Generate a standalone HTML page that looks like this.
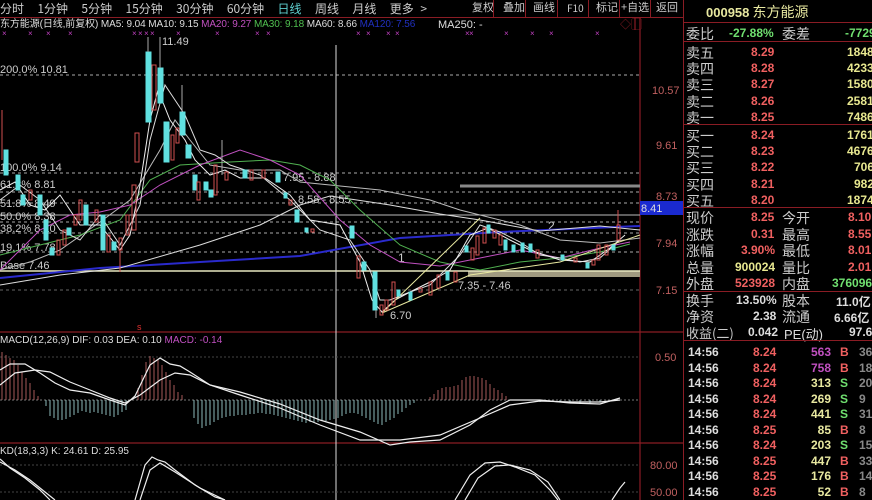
<!DOCTYPE html>
<html><head><meta charset="utf-8"><style>
*{margin:0;padding:0}
body{width:872px;height:500px;background:#000;overflow:hidden;position:relative;font-family:"Liberation Sans","Noto Sans CJK SC",sans-serif;color:#ddd}
.t{position:absolute;white-space:nowrap;line-height:1}
.rp{position:absolute;left:683px;top:0;width:189px;height:500px;border-left:1px solid #8a1c24}
.row{position:absolute;left:0;width:189px;height:16px;font-size:13px}
.row span{position:absolute;top:0;white-space:nowrap}
.l{left:2px;color:#ccc;font-family:"Noto Sans CJK SC",sans-serif;font-size:14px}
.p{color:#f06060;font-weight:bold;font-size:12px}
.v{color:#e8e890;font-weight:bold;font-size:12px}
.hl{position:absolute;left:0;width:189px;height:1px;background:#8a1c24}
.tk{font-size:12px;font-weight:bold}
</style></head><body>
<div class="t" style="left:0;top:3px;font-size:12px;color:#ccc;font-family:'Noto Sans CJK SC',sans-serif;word-spacing:4px">分时&nbsp; 1分钟&nbsp; 5分钟&nbsp; 15分钟&nbsp; 30分钟&nbsp; 60分钟&nbsp; <span style="color:#5fd0d0">日线</span>&nbsp; 周线&nbsp; 月线&nbsp; 更多 &gt;</div>
<div style="position:absolute;left:0;top:17px;width:683px;height:1px;background:#8a1c24"></div>
<div style="position:absolute;left:468px;top:0;width:215px;height:17px;font-size:11px;color:#ccc;font-family:'Noto Sans CJK SC',sans-serif">
<span class="t" style="left:4px;top:2px">复权</span><span class="t" style="left:35px;top:2px">叠加</span><span class="t" style="left:65px;top:2px">画线</span><span class="t" style="left:99px;top:3px;font-size:10px">F10</span><span class="t" style="left:128px;top:2px">标记</span><span class="t" style="left:153px;top:2px">+自选</span><span class="t" style="left:188px;top:2px">返回</span>
<div style="position:absolute;left:25px;top:0;width:1px;height:17px;background:#8a1c24"></div><div style="position:absolute;left:57px;top:0;width:1px;height:17px;background:#8a1c24"></div><div style="position:absolute;left:89px;top:0;width:1px;height:17px;background:#8a1c24"></div><div style="position:absolute;left:120px;top:0;width:1px;height:17px;background:#8a1c24"></div><div style="position:absolute;left:151px;top:0;width:1px;height:17px;background:#8a1c24"></div><div style="position:absolute;left:182px;top:0;width:1px;height:17px;background:#8a1c24"></div>
</div>
<div class="t" style="left:0;top:20px;font-size:10px;letter-spacing:-0.1px;color:#ddd">东方能源(日线,前复权) MA5: 9.04 MA10: 9.15 <span style="color:#c050c0">MA20: 9.27</span> <span style="color:#50c050">MA30: 9.18</span> MA60: 8.66 <span style="color:#2030c0">MA120: 7.56</span></div>
<div class="t" style="left:438px;top:20px;font-size:11px;color:#ddd">MA250: -</div>
<div class="t" style="left:620px;top:20px;font-size:11px;color:#8a1c24">◇▢</div>

<svg width="683" height="500" style="position:absolute;left:0;top:0" font-family="Liberation Sans" font-size="11">
<g stroke="#8a1c24" stroke-width="1.2">
<line x1="640" y1="18" x2="640" y2="500"/><line x1="0" y1="332" x2="683" y2="332"/><line x1="0" y1="443" x2="683" y2="443"/>
<line x1="635" y1="18" x2="635" y2="30"/>
</g>
<g fill="#c040c0" font-size="8"><text x="2" y="36">×</text><text x="28" y="36">×</text><text x="46" y="36">×</text><text x="68" y="36">×</text><text x="132" y="36">×</text><text x="138" y="36">×</text><text x="144" y="36">×</text><text x="150" y="36">×</text><text x="176" y="36">×</text><text x="215" y="36">×</text><text x="255" y="36">×</text><text x="266" y="36">×</text><text x="356" y="36">×</text><text x="366" y="36">×</text><text x="386" y="36">×</text><text x="395" y="36">×</text><text x="465" y="36">×</text><text x="469" y="36">×</text><text x="504" y="36">×</text><text x="530" y="36">×</text><text x="549" y="36">×</text><text x="595" y="36">×</text></g>
<g stroke="#aaa" stroke-dasharray="3,3" stroke-width="1">
<line x1="0" y1="75" x2="640" y2="75"/><line x1="0" y1="173" x2="640" y2="173"/><line x1="0" y1="192" x2="640" y2="192"/><line x1="0" y1="203" x2="640" y2="203"/><line x1="0" y1="222" x2="640" y2="222"/><line x1="0" y1="233" x2="640" y2="233"/><line x1="0" y1="252" x2="640" y2="252"/><line x1="0" y1="290" x2="640" y2="290" stroke="#666"/>
</g>
<line x1="0" y1="215" x2="640" y2="215" stroke="#bbb"/>
<line x1="460" y1="186" x2="640" y2="186" stroke="#888" stroke-width="3"/>
<rect x="468" y="271" width="172" height="6" fill="#a09a80"/>
<line x1="0" y1="271" x2="640" y2="271" stroke="#e8e8c0" stroke-width="1.5"/>
<line x1="336" y1="45" x2="336" y2="500" stroke="#ddd"/>
<g fill="#ccc"><text x="0" y="73">200.0% 10.81</text><text x="0" y="171">100.0% 9.14</text><text x="0" y="188">61.8% 8.81</text><text x="0" y="207">51.8% 8.49</text><text x="0" y="220">50.0% 8.38</text><text x="0" y="232">38.2% 8.10</text><text x="0" y="251">19.1% 7.78</text><text x="0" y="269">Base 7.46</text>
<text x="162" y="45">11.49</text><text x="283" y="181">7.95 - 8.88</text><text x="298" y="203">8.58 - 8.55</text><text x="390" y="319">6.70</text><text x="458" y="289">7.35 - 7.46</text><text x="398" y="262" font-size="12">1</text><text x="548" y="230" font-size="12">2</text></g>
<g fill="none" stroke-width="1">
<polyline stroke="#2a2acc" stroke-width="2" points="0,278 100,268 200,262 300,256 400,238 500,232 640,226"/>
<polyline stroke="#ddd" points="0,285 60,275 120,268 200,245 260,225 300,205 330,196 390,205 440,214 480,220 540,231 600,226 640,230"/>
<polyline stroke="#bbb" points="0,270 30,262 60,250 100,222 130,200 160,150 175,120 190,140 210,165 240,170 280,170 300,182 330,185 380,190 430,200 460,210 520,225 560,240 600,243 640,238"/>
<polyline stroke="#50b050" points="0,255 40,245 80,235 120,220 150,180 180,165 230,162 270,160 300,165 330,180 360,210 400,245 440,262 480,270 520,262 560,258 600,252 630,244"/>
<polyline stroke="#c050c0" points="0,270 20,250 40,230 70,215 100,212 130,205 160,185 200,165 240,150 270,160 300,175 340,220 370,245 400,262 440,266 480,258 520,250 560,258 600,248 630,242"/>
<polyline stroke="#ddd" points="0,200 20,185 40,200 60,230 80,240 100,215 120,245 140,205 150,140 165,85 175,100 185,115 200,150 215,155 230,165 260,175 290,200 320,230 350,240 370,270 380,300 390,300 410,292 430,285 460,255 480,225 500,232 520,242 540,255 560,258 580,262 600,258 620,240"/>
<polyline stroke="#eee" points="0,190 15,182 30,205 45,210 60,195 80,225 100,225 120,250 130,235 140,185 150,120 158,90 170,120 185,140 195,160 210,175 225,170 240,178 265,178 290,195 310,220 340,225 360,262 372,300 382,312 395,300 410,292 430,282 450,270 470,235 488,228 510,240 530,250 560,260 590,262 610,248 625,235"/>
<polyline stroke="#e8e8a0" points="382,313 470,275 560,262 640,235"/>
<polyline stroke="#e8e8a0" points="382,313 480,218"/>
</g>
<g stroke-width="1">
<g fill="#60e0e0" stroke="#60e0e0">
<rect x="4" y="150" width="4" height="25"/><rect x="16" y="175" width="4" height="15"/><rect x="21" y="195" width="4" height="10"/><rect x="38" y="195" width="4" height="20"/><rect x="44" y="220" width="4" height="20"/><rect x="50" y="248" width="4" height="7"/><rect x="67" y="228" width="4" height="7"/><rect x="84" y="205" width="4" height="20"/><rect x="101" y="215" width="4" height="35"/><rect x="112" y="242" width="4" height="8"/>
<rect x="146" y="52" width="5" height="70"/><rect x="158" y="68" width="5" height="35"/><rect x="164" y="122" width="5" height="40"/><rect x="180" y="112" width="5" height="23"/><rect x="186" y="145" width="5" height="13"/><rect x="193" y="175" width="4" height="15"/><rect x="204" y="182" width="4" height="8"/><rect x="209" y="190" width="4" height="7"/><rect x="243" y="170" width="4" height="8"/><rect x="276" y="172" width="4" height="10"/><rect x="284" y="193" width="3" height="5"/><rect x="295" y="210" width="4" height="12"/><rect x="305" y="228" width="3" height="4"/>
<rect x="350" y="226" width="4" height="12"/><rect x="362" y="262" width="4" height="8"/><rect x="373" y="272" width="4" height="38"/><rect x="397" y="290" width="3" height="6"/><rect x="409" y="292" width="3" height="8"/><rect x="446" y="272" width="3" height="8"/><rect x="465" y="246" width="3" height="6"/><rect x="487" y="225" width="3" height="8"/><rect x="504" y="240" width="3" height="10"/><rect x="512" y="245" width="3" height="7"/><rect x="521" y="243" width="3" height="9"/><rect x="529" y="244" width="3" height="8"/><rect x="561" y="255" width="3" height="5"/><rect x="586" y="263" width="3" height="5"/><rect x="612" y="245" width="3" height="5"/>
</g>
<g fill="none" stroke="#d05050">
<line x1="2" y1="110" x2="2" y2="160"/><rect x="29" y="190" width="3" height="10"/><rect x="57" y="240" width="3" height="15"/><rect x="63" y="230" width="3" height="15"/><rect x="74" y="215" width="3" height="10"/><rect x="79" y="200" width="3" height="20"/><rect x="95" y="210" width="3" height="12"/><rect x="107" y="235" width="3" height="17"/><rect x="119" y="238" width="3" height="12"/><line x1="120" y1="250" x2="120" y2="272"/><rect x="126" y="215" width="3" height="20"/><rect x="132" y="185" width="4" height="45"/><rect x="135" y="133" width="4" height="29"/>
<rect x="152" y="65" width="4" height="45"/><rect x="171" y="135" width="3" height="25"/><rect x="176" y="128" width="3" height="15"/><rect x="197" y="182" width="3" height="18"/><rect x="214" y="165" width="3" height="30"/><rect x="225" y="172" width="3" height="8"/><rect x="250" y="170" width="3" height="10"/><rect x="262" y="170" width="3" height="8"/><rect x="289" y="200" width="3" height="5"/><rect x="311" y="229" width="3" height="3"/>
<rect x="357" y="256" width="3" height="22"/><rect x="380" y="305" width="3" height="10"/><rect x="385" y="300" width="3" height="10"/><rect x="392" y="282" width="3" height="23"/><rect x="419" y="288" width="3" height="4"/><rect x="429" y="282" width="3" height="13"/><rect x="437" y="275" width="3" height="13"/><rect x="454" y="272" width="3" height="10"/><rect x="471" y="248" width="3" height="12"/><rect x="476" y="236" width="3" height="19"/><rect x="483" y="228" width="3" height="15"/><rect x="493" y="230" width="3" height="8"/><rect x="499" y="235" width="3" height="10"/><rect x="536" y="250" width="3" height="8"/><rect x="574" y="258" width="3" height="4"/><rect x="592" y="260" width="3" height="5"/><rect x="597" y="245" width="3" height="15"/><rect x="605" y="245" width="3" height="10"/><rect x="617" y="225" width="3" height="15"/><line x1="618" y1="210" x2="618" y2="225"/>
</g>
<g stroke="#aaa"><line x1="148" y1="37" x2="148" y2="52"/><line x1="160" y1="37" x2="160" y2="68"/><line x1="182" y1="85" x2="182" y2="112"/><line x1="222" y1="140" x2="222" y2="175"/><line x1="376" y1="310" x2="376" y2="318"/></g>
<text x="137" y="330" fill="#e03030" font-size="9">s</text>
</g>
<g fill="#c06060" font-size="11"><text x="652" y="94">10.57</text><text x="656" y="149">9.61</text><text x="656" y="200">8.73</text><text x="656" y="247">7.94</text><text x="656" y="294">7.15</text><text x="655" y="361">0.50</text><text x="650" y="469">80.00</text><text x="650" y="496">50.00</text></g>
<rect x="640" y="201" width="43" height="14" fill="#1a2ad0"/><text x="641" y="212" fill="#ddd">8.41</text>
<text x="0" y="343" fill="#ddd" font-size="10">MACD(12,26,9) DIF: 0.03 DEA: 0.10 <tspan fill="#c050c0">MACD: -0.14</tspan></text>
<line x1="0" y1="400" x2="640" y2="400" stroke="#777" stroke-dasharray="2,2"/>
<line x1="0" y1="357" x2="640" y2="357" stroke="#444" stroke-dasharray="2,2"/>
<line x1="0" y1="465" x2="640" y2="465" stroke="#444" stroke-dasharray="2,2"/>
<line x1="0" y1="492" x2="640" y2="492" stroke="#444" stroke-dasharray="2,2"/>
<path stroke="#d07070" stroke-width="0.8" d="M2 400V352M6 400V355M10 400V358M14 400V360M18 400V365M22 400V372M26 400V378M30 400V383M34 400V390M38 400V396M138 400V388M142 400V375M146 400V362M150 400V356M154 400V358M158 400V360M162 400V365M166 400V372M170 400V380M174 400V385M178 400V392M182 400V395M430 400V397M434 400V394M438 400V390M442 400V388M446 400V387M450 400V387M454 400V386M458 400V385M462 400V380M466 400V377M470 400V376M474 400V376M478 400V377M482 400V378M486 400V380M490 400V384M494 400V388M498 400V390M502 400V393M506 400V396"/>
<path stroke="#b0e8e8" stroke-width="0.8" d="M46 400V406M50 400V416M54 400V418M58 400V420M62 400V420M66 400V419M70 400V417M74 400V415M78 400V413M82 400V411M86 400V412M90 400V413M94 400V412M98 400V413M102 400V414M106 400V415M110 400V416M114 400V417M118 400V415M122 400V412M126 400V410M194 400V418M198 400V424M202 400V428M206 400V426M210 400V425M214 400V422M218 400V420M222 400V418M226 400V417M230 400V416M234 400V416M238 400V415M242 400V415M246 400V415M250 400V414M254 400V414M258 400V413M262 400V413M266 400V414M270 400V414M274 400V415M278 400V416M282 400V417M286 400V418M290 400V419M294 400V420M298 400V421M302 400V422M306 400V423M310 400V422M314 400V422M318 400V422M322 400V421M326 400V421M330 400V420M334 400V419M338 400V418M342 400V416M346 400V414M350 400V413M354 400V413M358 400V414M362 400V416M366 400V418M370 400V420M374 400V422M378 400V424M382 400V425M386 400V422M390 400V420M394 400V418M398 400V414M402 400V412M406 400V408M410 400V405M414 400V403M540 400V402M560 400V402M570 400V403M580 400V404M590 400V403M600 400V402"/>
<g fill="none" stroke="#eee" stroke-width="1.2">
<polyline points="0,370 10,364 25,364 40,373 55,383 70,390 90,393 110,400 125,405 135,396 150,365 160,358 170,364 180,366 190,372 210,385 240,392 280,404 320,420 360,432 390,445 410,442 440,440 470,425 490,410 510,400 540,400 570,403 600,404 620,398"/>
<polyline points="0,385 15,373 35,370 50,372 70,382 90,390 110,398 125,403 140,395 160,380 175,373 190,375 210,385 240,395 280,408 320,425 360,440 400,440 440,435 480,418 510,405 540,401 570,402 600,402 620,400"/>
</g>
<text x="0" y="454" fill="#ddd" font-size="10">KD(18,3,3) K: 24.61 D: 25.95</text>
<g fill="none" stroke="#eee" stroke-width="1.2">
<polyline points="0,459 10,468 25,478 40,490 50,500"/><polyline points="0,462 15,470 30,480 45,492 55,500"/>
<polyline points="135,500 145,465 152,457 158,460 165,462 175,470 195,485 215,497 225,500"/>
<polyline points="140,500 150,470 160,463 175,472 200,488 225,500"/>
<polyline points="455,500 470,475 485,463 500,462 515,467 535,475 550,490 558,500"/>
<polyline points="465,500 478,478 495,466 510,465 530,470 548,482 560,500"/>
<polyline points="612,500 620,488 625,482"/>
</g>
</svg>

<div class="rp">
<div class="t" style="left:22px;top:5px;font-size:14px;color:#e8e8a0;font-family:'Noto Sans CJK SC',sans-serif"><b style="font-family:'Liberation Sans';font-size:13px">000958</b> 东方能源</div>
<div class="hl" style="top:22px"></div>
<div class="row" style="top:24px"><span class="l">委比</span><span style="left:45px;color:#70e070;font-weight:bold;font-size:12px;top:2px">-27.88%</span><span class="l" style="left:98px;color:#ccc">委差</span><span style="left:161px;color:#70e070;font-weight:bold;font-size:12px;top:2px">-7729</span></div>
<div class="hl" style="top:41px"></div>
<div class="row" style="top:43px"><span class="l">卖五</span><span class="p" style="left:67px;top:2px">8.29</span><span class="v" style="left:163px;top:2px">1848</span></div>
<div class="row" style="top:59px"><span class="l">卖四</span><span class="p" style="left:67px;top:2px">8.28</span><span class="v" style="left:163px;top:2px">4233</span></div>
<div class="row" style="top:75px"><span class="l">卖三</span><span class="p" style="left:67px;top:2px">8.27</span><span class="v" style="left:163px;top:2px">1580</span></div>
<div class="row" style="top:92px"><span class="l">卖二</span><span class="p" style="left:67px;top:2px">8.26</span><span class="v" style="left:163px;top:2px">2581</span></div>
<div class="row" style="top:108px"><span class="l">卖一</span><span class="p" style="left:67px;top:2px">8.25</span><span class="v" style="left:163px;top:2px">7486</span></div>
<div class="hl" style="top:124px"></div>
<div class="row" style="top:126px"><span class="l">买一</span><span class="p" style="left:67px;top:2px">8.24</span><span class="v" style="left:163px;top:2px">1761</span></div>
<div class="row" style="top:142px"><span class="l">买二</span><span class="p" style="left:67px;top:2px">8.23</span><span class="v" style="left:163px;top:2px">4676</span></div>
<div class="row" style="top:158px"><span class="l">买三</span><span class="p" style="left:67px;top:2px">8.22</span><span class="v" style="left:170px;top:2px">706</span></div>
<div class="row" style="top:175px"><span class="l">买四</span><span class="p" style="left:67px;top:2px">8.21</span><span class="v" style="left:170px;top:2px">982</span></div>
<div class="row" style="top:191px"><span class="l">买五</span><span class="p" style="left:67px;top:2px">8.20</span><span class="v" style="left:163px;top:2px">1874</span></div>
<div class="hl" style="top:207px"></div>
<div class="row" style="top:208px"><span class="l">现价</span><span class="p" style="left:67px;top:2px">8.25</span><span class="l" style="left:98px">今开</span><span class="p" style="left:164px;top:2px">8.10</span></div>
<div class="row" style="top:225px"><span class="l">涨跌</span><span class="p" style="left:67px;top:2px">0.31</span><span class="l" style="left:98px">最高</span><span class="p" style="left:164px;top:2px">8.55</span></div>
<div class="row" style="top:241px"><span class="l">涨幅</span><span class="p" style="left:57px;top:2px">3.90%</span><span class="l" style="left:98px">最低</span><span class="p" style="left:164px;top:2px">8.01</span></div>
<div class="row" style="top:258px"><span class="l">总量</span><span class="v" style="left:51px;top:2px">900024</span><span class="l" style="left:98px">量比</span><span class="p" style="left:164px;top:2px">2.01</span></div>
<div class="row" style="top:274px"><span class="l">外盘</span><span class="p" style="left:51px;top:2px">523928</span><span class="l" style="left:98px">内盘</span><span style="left:148px;top:2px;color:#70e070;font-weight:bold;font-size:12px">376096</span></div>
<div class="hl" style="top:291px"></div>
<div class="row" style="top:291px"><span class="l">换手</span><span style="left:52px;top:2px;color:#ddd;font-weight:bold;font-size:12px">13.50%</span><span class="l" style="left:98px">股本</span><span style="left:152px;top:2px;color:#ddd;font-weight:bold;font-size:12px">11.0亿</span></div>
<div class="row" style="top:307px"><span class="l">净资</span><span style="left:69px;top:2px;color:#ddd;font-weight:bold;font-size:12px">2.38</span><span class="l" style="left:98px">流通</span><span style="left:150px;top:2px;color:#ddd;font-weight:bold;font-size:12px">6.66亿</span></div>
<div class="row" style="top:323px"><span class="l" style="font-size:13px">收益(二)</span><span style="left:64px;top:2px;color:#ddd;font-weight:bold;font-size:12px">0.042</span><span style="left:100px;top:1px;color:#ddd;font-size:13px">PE(动)</span><span style="left:165px;top:2px;color:#ddd;font-weight:bold;font-size:12px">97.6</span></div>
<div class="hl" style="top:340px"></div>
</div>
<div style="position:absolute;left:683px;top:342px;width:189px;font-size:12px;font-weight:bold">
<div class="t" style="left:0;top:0;width:189px;height:158px">
<div class="t tk" style="left:5px;top:3px;color:#ddd;line-height:15.5px">14:56<br>14:56<br>14:56<br>14:56<br>14:56<br>14:56<br>14:56<br>14:56<br>14:56<br>14:56</div>
<div class="t tk" style="left:70px;top:3px;color:#f06060;line-height:15.5px">8.24<br>8.24<br>8.24<br>8.24<br>8.24<br>8.25<br>8.24<br>8.25<br>8.25<br>8.25</div>
<div class="t tk" style="left:128px;top:3px;line-height:15.5px;text-align:right;width:20px;color:#e8e8a0"><span style="color:#c050c0">563</span><br><span style="color:#c050c0">758</span><br>313<br>269<br>441<br>85<br>203<br>447<br>176<br>52</div>
<div class="t tk" style="left:157px;top:3px;line-height:15.5px;color:#f06060">B<br>B<br><span style="color:#70e070">S</span><br><span style="color:#70e070">S</span><br><span style="color:#70e070">S</span><br>B<br><span style="color:#70e070">S</span><br>B<br>B<br>B</div>
<div class="t tk" style="left:176px;top:3px;line-height:15.5px;color:#888">36<br>18<br>20<br>9<br>31<br>8<br>15<br>33<br>14<br>8</div>
</div></div>
</body></html>
